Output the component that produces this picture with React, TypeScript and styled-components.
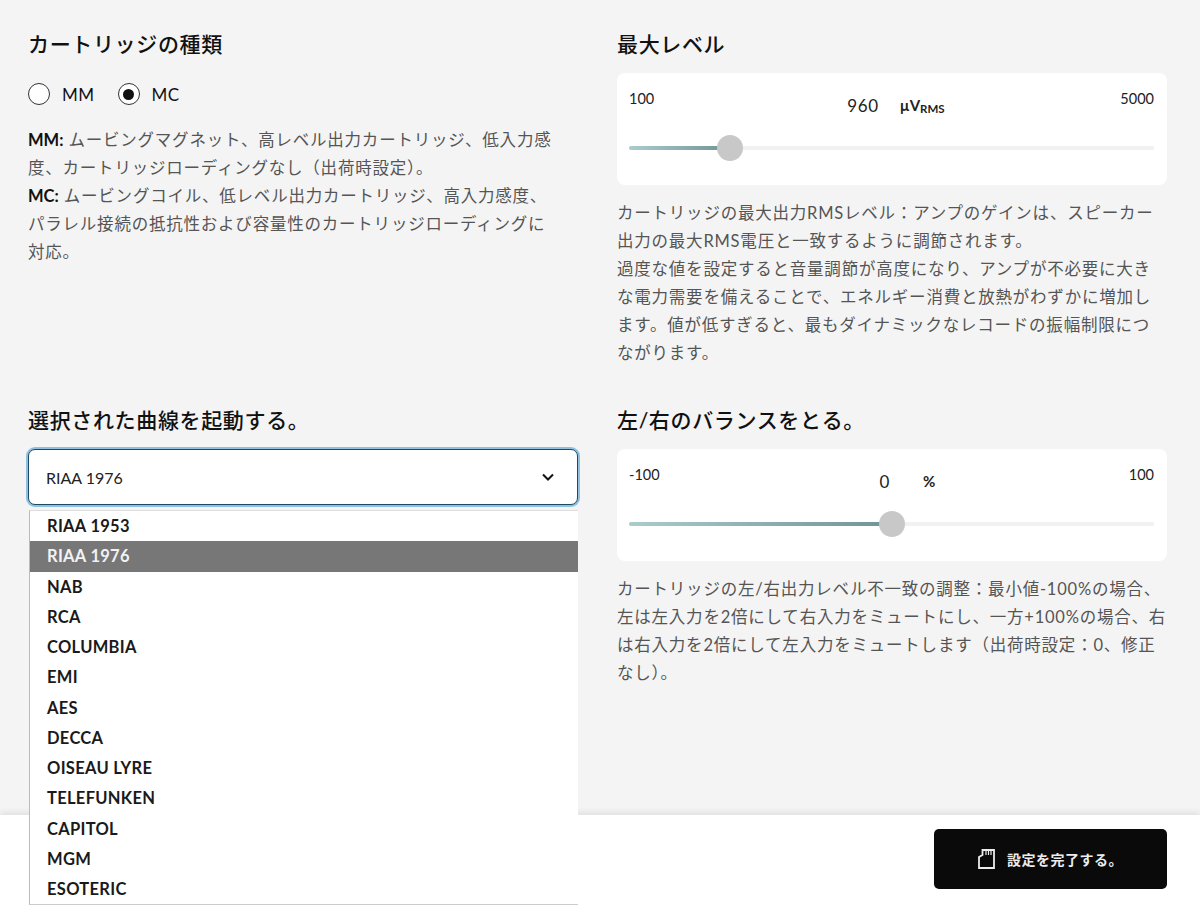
import React from "react"
import styled, { createGlobalStyle } from "styled-components"

const GlobalStyle = createGlobalStyle`
  html, body {
    margin: 0;
    padding: 0;
    height: 100%;
    background: #f4f4f4;
  }
  body {
    font-family: "Lato", "Noto Sans CJK JP", sans-serif;
    color: #111;
    overflow: hidden;
  }
`

const Page = styled.div`
  height: 919px;
  display: flex;
  flex-direction: column;
`

const Main = styled.main`
  flex: 1;
  padding: 28px 33px 0 28px;
  display: grid;
  grid-template-columns: 550px 550px;
  grid-template-rows: 348px auto;
  column-gap: 39px;
  row-gap: 28px;
  align-content: start;
`

const Section = styled.section`
  min-width: 0;
`

const Heading = styled.h2`
  margin: 0 0 13px;
  font-size: 21px;
  line-height: 32px;
  font-weight: 500;
  letter-spacing: 0.65px;
  color: #111;
`

const RadioRow = styled.div`
  display: flex;
  align-items: center;
  height: 28px;
  margin: 20px 0 18px;
  gap: 23px;
`

const RadioItem = styled.label`
  display: flex;
  align-items: center;
  gap: 12px;
  font-size: 17px;
  letter-spacing: 0.5px;
`

const RadioCircle = styled.span<{ $on?: boolean }>`
  width: 22px;
  height: 22px;
  box-sizing: border-box;
  border: 1px solid #333;
  border-radius: 50%;
  background: #fff;
  display: flex;
  align-items: center;
  justify-content: center;

  &::after {
    content: "";
    width: 11px;
    height: 11px;
    border-radius: 50%;
    background: ${(p) => (p.$on ? "#111" : "transparent")};
  }
`

const Description = styled.p<{ $maxWidth: number }>`
  margin: 0;
  max-width: ${(p) => p.$maxWidth}px;
  font-size: 16.5px;
  line-height: 28px;
  letter-spacing: 0.78px;
  color: #555;

  b {
    font-family: "Lato", sans-serif;
    font-weight: 700;
    color: #111;
    letter-spacing: 0;
  }
`

const Panel = styled.div`
  height: 112px;
  box-sizing: border-box;
  background: #fff;
  border-radius: 8px;
  padding: 15px 13px 0 12px;
  margin-bottom: 14px;
`

const ScaleRow = styled.div`
  display: grid;
  grid-template-columns: 1fr auto 1fr;
  align-items: start;
  height: 58px;
  font-size: 14.5px;
  line-height: 21px;
  color: #222;

  > span:last-child {
    justify-self: end;
  }
`

const Readout = styled.div<{ $shift: number; $gap: number }>`
  display: flex;
  align-items: center;
  gap: ${(p) => p.$gap}px;
  height: 24px;
  margin: 5px 0 0 ${(p) => p.$shift}px;
`

const Value = styled.span`
  font-size: 17px;
  letter-spacing: 0.6px;
  color: #222;
`

const Unit = styled.span`
  font-size: 15px;
  font-weight: 700;
  color: #222;

  sub {
    font-size: 11.5px;
    vertical-align: -2px;
    line-height: 0;
  }
`

const Track = styled.div`
  position: relative;
  height: 4px;
  background: #f1f1f1;
  border-radius: 2px;
`

const TrackFill = styled.div`
  height: 100%;
  border-radius: 2px;
  background: linear-gradient(90deg, #a9cccd, #6f9495);
`

const Thumb = styled.span`
  position: absolute;
  top: 50%;
  width: 26px;
  height: 26px;
  margin: -13px 0 0 -13px;
  border-radius: 50%;
  background: #c8c8c8;
`

const SelectWrap = styled.div`
  position: relative;
  z-index: 5;
`

const SelectBox = styled.div`
  height: 56px;
  box-sizing: border-box;
  display: flex;
  align-items: center;
  justify-content: space-between;
  padding: 0 22px 0 17px;
  background: #fff;
  border: 1px solid #1d4a63;
  border-radius: 7px;
  box-shadow: 0 0 0 2px #8fc0e0;
  font-size: 16px;
  color: #222;
`

const Menu = styled.ul`
  position: absolute;
  top: 61px;
  left: 1px;
  right: 0;
  margin: 0;
  padding: 0;
  list-style: none;
  background: #fff;
  border-left: 1px solid #bbb;
  border-bottom: 1px solid #ccc;
  border-top: 1px solid #ddd;
`

const MenuItem = styled.li<{ $active?: boolean }>`
  height: 30.25px;
  line-height: 30.25px;
  padding-left: 17px;
  font-size: 16.5px;
  font-weight: 700;
  letter-spacing: 0.3px;
  color: ${(p) => (p.$active ? "#f2f2f2" : "#1a1a1a")};
  background: ${(p) => (p.$active ? "#777" : "transparent")};
`

const Footer = styled.footer`
  height: 104px;
  flex: none;
  box-sizing: border-box;
  display: flex;
  align-items: flex-start;
  justify-content: flex-end;
  padding: 14px 33px 0 0;
  background: #fff;
  box-shadow: 0 -3px 6px rgba(0, 0, 0, 0.08);
`

const SaveButton = styled.button`
  width: 233px;
  height: 60px;
  display: flex;
  align-items: center;
  justify-content: center;
  gap: 12px;
  border: 0;
  border-radius: 5px;
  background: #0a0a0a;
  color: #ececec;
  font-family: inherit;
  font-size: 14px;
  font-weight: 700;
  letter-spacing: 0.5px;
`

const curves = [
  "RIAA 1953",
  "RIAA 1976",
  "NAB",
  "RCA",
  "COLUMBIA",
  "EMI",
  "AES",
  "DECCA",
  "OISEAU LYRE",
  "TELEFUNKEN",
  "CAPITOL",
  "MGM",
  "ESOTERIC",
]

const Slider: React.FC<{ percent: number }> = ({ percent }) => (
  <Track>
    <TrackFill style={{ width: `${percent}%` }} />
    <Thumb style={{ left: `${percent}%` }} />
  </Track>
)

const SdCardIcon = () => (
  <svg width="17" height="20" viewBox="0 0 17 20" fill="none" stroke="#ececec" strokeWidth="1.8">
    <path d="M4.5 1H16V19H1V8L4.5 6Z" />
    <path d="M8 2V6M10.5 2V6M13 2V6" strokeWidth="1.2" />
  </svg>
)

const Chevron = () => (
  <svg width="14" height="10" viewBox="0 0 14 10" fill="none" stroke="#111" strokeWidth="2">
    <path d="M2 2.5L7 7.5L12 2.5" />
  </svg>
)

const App: React.FC = () => {
  return (
    <Page>
      <GlobalStyle />
      <Main>
        <Section>
          <Heading>カートリッジの種類</Heading>
          <RadioRow>
            <RadioItem>
              <RadioCircle />
              MM
            </RadioItem>
            <RadioItem>
              <RadioCircle $on />
              MC
            </RadioItem>
          </RadioRow>
          <Description $maxWidth={530}>
            <b>MM:</b> ムービングマグネット、高レベル出力カートリッジ、低入力感度、カートリッジローディングなし（出荷時設定）。
            <br />
            <b>MC:</b> ムービングコイル、低レベル出力カートリッジ、高入力感度、パラレル接続の抵抗性および容量性のカートリッジローディングに対応。
          </Description>
        </Section>

        <Section>
          <Heading>最大レベル</Heading>
          <Panel>
            <ScaleRow>
              <span>100</span>
              <Readout $shift={9} $gap={21}>
                <Value>960</Value>
                <Unit>
                  µV<sub>RMS</sub>
                </Unit>
              </Readout>
              <span>5000</span>
            </ScaleRow>
            <Slider percent={19.2} />
          </Panel>
          <Description $maxWidth={541}>
            カートリッジの最大出力RMSレベル：アンプのゲインは、スピーカー出力の最大RMS電圧と一致するように調節されます。
            <br />
            過度な値を設定すると音量調節が高度になり、アンプが不必要に大きな電力需要を備えることで、エネルギー消費と放熱がわずかに増加します。値が低すぎると、最もダイナミックなレコードの振幅制限につながります。
          </Description>
        </Section>

        <Section>
          <Heading>選択された曲線を起動する。</Heading>
          <SelectWrap>
            <SelectBox>
              RIAA 1976
              <Chevron />
            </SelectBox>
            <Menu>
              {curves.map((c) => (
                <MenuItem key={c} $active={c === "RIAA 1976"}>
                  {c}
                </MenuItem>
              ))}
            </Menu>
          </SelectWrap>
        </Section>

        <Section>
          <Heading>左/右のバランスをとる。</Heading>
          <Panel>
            <ScaleRow>
              <span>-100</span>
              <Readout $shift={32} $gap={33}>
                <Value>0</Value>
                <Unit>%</Unit>
              </Readout>
              <span>100</span>
            </ScaleRow>
            <Slider percent={50} />
          </Panel>
          <Description $maxWidth={550}>
            カートリッジの左/右出力レベル不一致の調整：最小値-100%の場合、左は左入力を2倍にして右入力をミュートにし、一方+100%の場合、右は右入力を2倍にして左入力をミュートします（出荷時設定：0、修正なし）。
          </Description>
        </Section>
      </Main>
      <Footer>
        <SaveButton>
          <SdCardIcon />
          設定を完了する。
        </SaveButton>
      </Footer>
    </Page>
  )
}

export default App
